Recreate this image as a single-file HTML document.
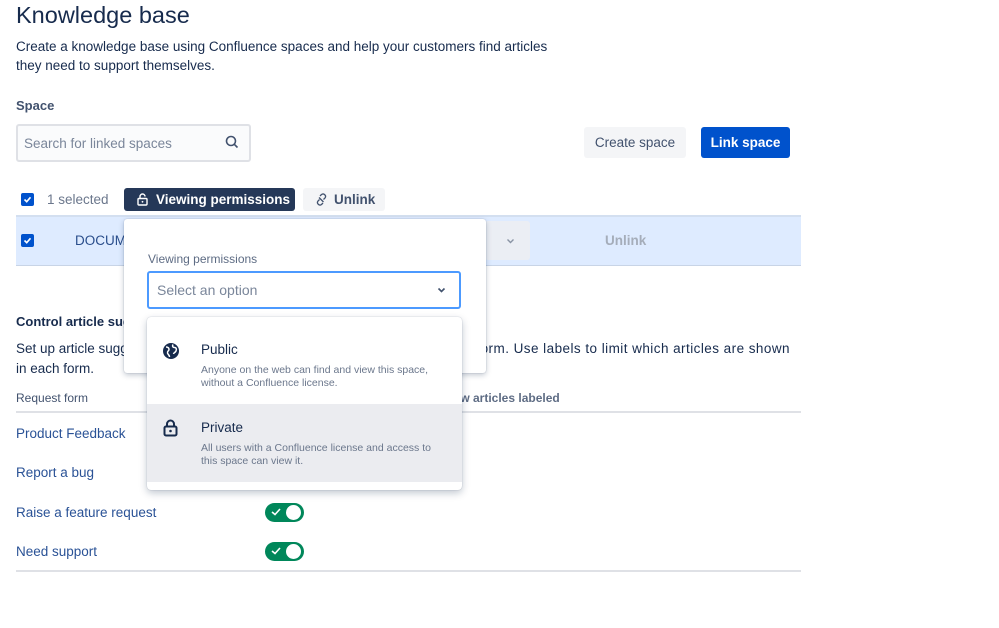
<!DOCTYPE html>
<html><head><meta charset="utf-8"><style>
*{margin:0;padding:0;box-sizing:border-box}
body{width:999px;height:628px;background:#fff;font-family:"Liberation Sans",sans-serif;color:#172b4d;position:relative;overflow:hidden;font-size:13px}
.a{position:absolute;white-space:nowrap}
.link{color:#2a5296;font-size:13.5px}
.cb{position:absolute;width:13px;height:13px;background:#0052cc;border-radius:2px}
.cb svg{position:absolute;left:2px;top:2px}
.tog{position:absolute;width:39px;height:19px;background:#00875a;border-radius:10px}
.tog::after{content:"";position:absolute;right:3px;top:2px;width:15px;height:15px;border-radius:50%;background:#fff}
.tog svg{position:absolute;left:6px;top:5px}
</style></head><body>
<div class="a" style="left:16px;top:2px;font-size:23.5px;color:#172b4d">Knowledge base</div>
<div class="a" style="left:16px;top:37px;font-size:13.5px;line-height:19px;color:#172b4d">Create a knowledge base using Confluence spaces and help your customers find articles<br>they need to support themselves.</div>
<div class="a" style="left:16px;top:98px;font-size:13px;font-weight:bold;color:#42526e">Space</div>
<div class="a" style="left:16px;top:124px;width:235px;height:38px;border:2px solid #dfe1e6;background:#fafbfc;border-radius:3px"></div>
<div class="a" style="left:24px;top:136px;font-size:13.5px;color:#7a869a">Search for linked spaces</div>
<svg class="a" style="left:225px;top:135px" width="14" height="14" viewBox="0 0 14 14"><circle cx="6" cy="6" r="4.5" fill="none" stroke="#42526e" stroke-width="1.6"/><path d="M9.3 9.3L12.5 12.5" stroke="#42526e" stroke-width="1.6"/></svg>
<div class="a" style="left:584px;top:127px;width:102px;height:31px;background:#f4f5f7;border-radius:3px;text-align:center;line-height:31px;font-size:13.5px;color:#42526e">Create space</div>
<div class="a" style="left:701px;top:127px;width:89px;height:31px;background:#0052cc;border-radius:3px;text-align:center;line-height:31px;font-size:13.5px;font-weight:bold;color:#fff">Link space</div>

<div class="cb" style="left:21px;top:193px"><svg width="9" height="9" viewBox="0 0 9 9"><path d="M1.5 4.5L3.7 6.7L7.5 2.3" fill="none" stroke="#fff" stroke-width="1.6"/></svg></div>
<div class="a" style="left:47px;top:192px;font-size:13.5px;color:#6b778c">1 selected</div>
<div class="a" style="left:124px;top:188px;width:171px;height:23px;background:#253858;border-radius:3px"></div>
<svg class="a" style="left:137px;top:193px" width="11" height="13" viewBox="0 0 11 13"><rect x="1" y="5.5" width="9" height="6.5" rx="1" fill="none" stroke="#fff" stroke-width="1.4"/><path d="M3 5.5V3.5a2.5 2.5 0 0 1 5 0" fill="none" stroke="#fff" stroke-width="1.4"/><circle cx="5.5" cy="8.8" r="0.9" fill="#fff"/></svg>
<div class="a" style="left:156px;top:192px;font-size:13.5px;font-weight:bold;color:#fff">Viewing permissions</div>
<div class="a" style="left:303px;top:188px;width:82px;height:23px;background:#f4f5f7;border-radius:3px"></div>
<svg class="a" style="left:315px;top:193px" width="13" height="13" viewBox="0 0 13 13"><path d="M5 3L6.5 1.5a2.5 2.5 0 0 1 3.5 3.5L8.5 6.5M4.5 6.5L3 8a2.5 2.5 0 0 0 3.5 3.5L8 10M4 4.5L8.5 9" fill="none" stroke="#42526e" stroke-width="1.3"/></svg>
<div class="a" style="left:334px;top:192px;font-size:13.5px;font-weight:bold;color:#42526e">Unlink</div>

<div class="a" style="left:16px;top:215px;width:785px;height:51px;background:#deebff;border-top:2px solid #d3dff0;border-bottom:1px solid #c8d4e6"></div>
<div class="cb" style="left:21px;top:234px"><svg width="9" height="9" viewBox="0 0 9 9"><path d="M1.5 4.5L3.7 6.7L7.5 2.3" fill="none" stroke="#fff" stroke-width="1.6"/></svg></div>
<div class="a" style="left:75px;top:233px;font-size:13.5px;color:#2a4e8c">DOCUM</div>
<div class="a" style="left:485px;top:221px;width:45px;height:39px;background:#ebeef4;border-radius:3px"></div>
<svg class="a" style="left:506px;top:238px" width="9" height="6" viewBox="0 0 9 6"><path d="M1.5 1.5L4.5 4.5L7.5 1.5" fill="none" stroke="#8993a4" stroke-width="1.4"/></svg>
<div class="a" style="left:605px;top:233px;font-size:13.5px;font-weight:bold;color:#a5adba">Unlink</div>

<div class="a" style="left:16px;top:314px;font-size:13px;font-weight:bold;color:#172b4d">Control article suggestions</div>
<div class="a" style="left:16px;top:339px;font-size:13.5px;line-height:20px;color:#172b4d">Set up article suggestions for each request type in the portal and request form.<br>in each form.</div>
<div class="a" style="left:468px;top:339px;width:332px;height:20px;background:#fff;font-size:13.5px;line-height:20px;color:#172b4d;letter-spacing:0.45px">t form. Use labels to limit which articles are shown</div>
<div class="a" style="left:16px;top:391px;font-size:12px;color:#42526e">Request form</div>
<div class="a" style="left:453px;top:391px;font-size:12px;font-weight:bold;color:#5e6c84">ow articles labeled</div>
<div class="a" style="left:16px;top:411px;width:785px;height:2px;background:#dfe1e6"></div>
<div class="a link" style="left:16px;top:426px">Product Feedback</div>
<div class="a link" style="left:16px;top:465px">Report a bug</div>
<div class="a link" style="left:16px;top:505px">Raise a feature request</div>
<div class="a link" style="left:16px;top:544px">Need support</div>
<div class="tog" style="left:265px;top:503px"><svg width="10" height="8" viewBox="0 0 10 8"><path d="M1 4L4 6.5L9 1" fill="none" stroke="#fff" stroke-width="1.6"/></svg></div>
<div class="tog" style="left:265px;top:542px"><svg width="10" height="8" viewBox="0 0 10 8"><path d="M1 4L4 6.5L9 1" fill="none" stroke="#fff" stroke-width="1.6"/></svg></div>
<div class="a" style="left:16px;top:570px;width:785px;height:2px;background:#dfe1e6"></div>

<div class="a" style="left:124px;top:219px;width:362px;height:154px;background:#fff;border-radius:3px;box-shadow:0 2px 6px rgba(9,30,66,.25),0 0 1px rgba(9,30,66,.3)"></div>
<div class="a" style="left:148px;top:252px;font-size:12px;color:#5e6c84">Viewing permissions</div>
<div class="a" style="left:147px;top:271px;width:314px;height:38px;border:2px solid #4c9aff;border-radius:3px;background:#fff"></div>
<div class="a" style="left:157px;top:282px;font-size:14px;color:#7a869a">Select an option</div>
<svg class="a" style="left:437px;top:287px" width="9" height="6" viewBox="0 0 9 6"><path d="M1.5 1.5L4.5 4.5L7.5 1.5" fill="none" stroke="#42526e" stroke-width="1.6"/></svg>

<div class="a" style="left:147px;top:317px;width:315px;height:173px;background:#fff;border-radius:4px;box-shadow:0 3px 8px rgba(9,30,66,.25),0 0 1px rgba(9,30,66,.3)"></div>
<svg class="a" style="left:162px;top:342px" width="18" height="18" viewBox="0 0 18 18"><circle cx="9" cy="9" r="8" fill="#172b4d"/><path d="M4 5c2 0 3 1 3 2.5S5 9 5.5 11s2 1.5 2 4M11 2.5c-1 2 0 3 1.5 3S15 7 14 9s-2 1-2.5 3" fill="none" stroke="#fff" stroke-width="1.5"/></svg>
<div class="a" style="left:201px;top:342px;font-size:13.5px;color:#172b4d">Public</div>
<div class="a" style="left:201px;top:364px;font-size:10.5px;line-height:13px;color:#6b778c">Anyone on the web can find and view this space,<br>without a Confluence license.</div>
<div class="a" style="left:147px;top:404px;width:315px;height:78px;background:#ebecf0"></div>
<svg class="a" style="left:163px;top:419px" width="15" height="18" viewBox="0 0 15 18"><rect x="1.5" y="7.5" width="12" height="9" rx="1.5" fill="none" stroke="#172b4d" stroke-width="2"/><path d="M4 7.5V5a3.5 3.5 0 0 1 7 0v2.5" fill="none" stroke="#172b4d" stroke-width="2"/><circle cx="7.5" cy="12" r="1.3" fill="#172b4d"/></svg>
<div class="a" style="left:201px;top:420px;font-size:13.5px;color:#172b4d">Private</div>
<div class="a" style="left:201px;top:442px;font-size:10.5px;line-height:13px;color:#6b778c">All users with a Confluence license and access to<br>this space can view it.</div>
</body></html>
